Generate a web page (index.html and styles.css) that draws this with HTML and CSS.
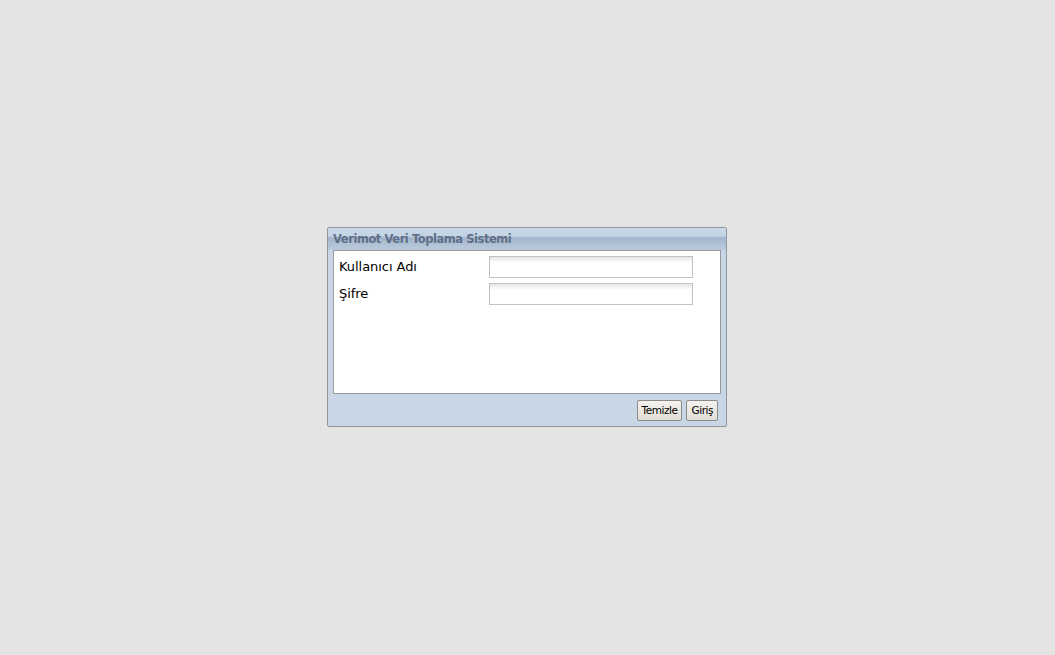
FILE: index.html
```html
<!DOCTYPE html>
<html lang="tr">
<head>
<meta charset="utf-8">
<title>Verimot Veri Toplama Sistemi</title>
<link rel="stylesheet" href="styles.css">
</head>
<body>
<div class="stage">
  <div class="window">
    <div class="header">Verimot Veri Toplama Sistemi</div>
    <div class="content">
      <div class="form">
        <div class="row">
          <label class="label">Kullanıcı Adı</label>
          <input class="field" type="text">
        </div>
        <div class="row">
          <label class="label">Şifre</label>
          <input class="field" type="password">
        </div>
      </div>
    </div>
    <div class="footer">
      <button class="btn">Temizle</button>
      <button class="btn">Giriş</button>
    </div>
  </div>
</div>
</body>
</html>
```
FILE: styles.css
```css
html, body {
  margin: 0;
  padding: 0;
  background: #e4e4e4;
}
.stage {
  height: 655px;
  display: flex;
  align-items: flex-start;
  justify-content: flex-start;
  padding: 227px 0 0 327px;
  box-sizing: border-box;
}
.window {
  width: 400px;
  height: 200px;
  box-sizing: border-box;
  border: 1px solid #8f969e;
  border-radius: 2px;
  background: #c9d6e6;
  display: flex;
  flex-direction: column;
  font-family: "DejaVu Sans", Verdana, sans-serif;
}
.header {
  height: 22px;
  box-sizing: border-box;
  padding: 4px 0 0 5px;
  font-size: 11.5px;
  font-weight: bold;
  color: #5f6f87;
  background: linear-gradient(to bottom, #cad9e9 0px, #c3d3e5 8px, #a3b5cd 10px, #b0c1d6 16px, #bccbdd 22px);
  line-height: 14px;
  white-space: nowrap;
  letter-spacing: -0.45px;
}
.content {
  padding: 0 5px;
}
.form {
  height: 144px;
  box-sizing: border-box;
  border: 1px solid #9a9a9a;
  background: #ffffff;
  padding: 5px 0 0 5px;
  display: flex;
  flex-direction: column;
  gap: 5px;
}
.row {
  display: flex;
  align-items: center;
  height: 22px;
}
.label {
  width: 150px;
  font-size: 13px;
  color: #000;
  letter-spacing: -0.05px;
  margin-top: -1px;
}
.field {
  width: 204px;
  height: 22px;
  box-sizing: border-box;
  margin: 0;
  border: 1px solid #c2c2c2;
  background: linear-gradient(to bottom, #e6e6e6 0px, #ffffff 6px);
  outline: none;
  padding: 0 3px;
}
.footer {
  flex: 1;
  display: flex;
  justify-content: flex-end;
  align-items: flex-start;
  gap: 4px;
  padding: 6px 8px 0 0;
}
.btn {
  height: 21px;
  box-sizing: border-box;
  margin: 0;
  padding: 0 4px;
  border: 1px solid #8a8a8a;
  border-radius: 2px;
  background: linear-gradient(to bottom, #f4f2ee, #e2ded6);
  font-family: "DejaVu Sans", Verdana, sans-serif;
  font-size: 10.5px;
  color: #000;
  letter-spacing: -0.45px;
  line-height: 19px;
}
```
